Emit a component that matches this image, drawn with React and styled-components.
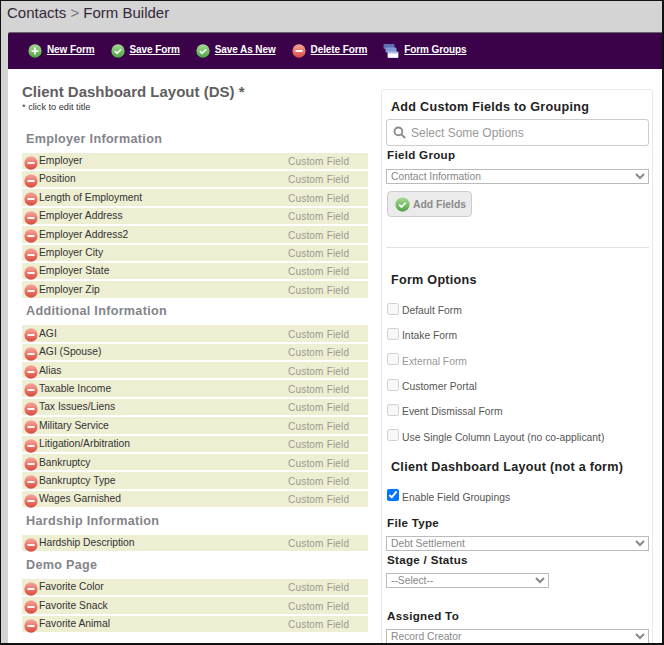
import React from 'react';
import styled, { createGlobalStyle } from 'styled-components';

const GlobalStyle = createGlobalStyle`
    html, body {
        margin: 0;
        padding: 0;
        background: #fff;
    }
    * {
        box-sizing: border-box;
    }
`;

const groups = [
    {
        title: 'Employer Information',
        fields: ['Employer', 'Position', 'Length of Employment', 'Employer Address', 'Employer Address2', 'Employer City', 'Employer State', 'Employer Zip'],
    },
    {
        title: 'Additional Information',
        fields: ['AGI', 'AGI (Spouse)', 'Alias', 'Taxable Income', 'Tax Issues/Liens', 'Military Service', 'Litigation/Arbitration', 'Bankruptcy', 'Bankruptcy Type', 'Wages Garnished'],
    },
    { title: 'Hardship Information', fields: ['Hardship Description'] },
    { title: 'Demo Page', fields: ['Favorite Color', 'Favorite Snack', 'Favorite Animal'] },
];

const formOptions = ['Default Form', 'Intake Form', 'External Form', 'Customer Portal', 'Event Dismissal Form', 'Use Single Column Layout (no co-applicant)'];

// glossy round icon used in the toolbar, rows and the add button
function RoundIcon({ kind, size = 14 }) {
    const colors = kind === 'remove'
        ? ['#f5a79c', '#d9493f']
        : ['#a6d994', '#4fa543'];
    const id = 'grad-' + kind;
    return (
        <svg width={size} height={size} viewBox="0 0 16 16" style={{ flexShrink: 0 }}>
            <defs>
                <linearGradient id={id} x1="0" y1="0" x2="0" y2="1">
                    <stop offset="0" stopColor={colors[0]} />
                    <stop offset="1" stopColor={colors[1]} />
                </linearGradient>
            </defs>
            <circle cx="8" cy="8" r="7.6" fill={`url(#${id})`} />
            {kind === 'remove' && <rect x="4" y="6.9" width="8" height="2.2" rx="0.6" fill="#fff" opacity="0.92" />}
            {kind === 'add' && <path d="M7 4h2v3h3v2H9v3H7V9H4V7h3z" fill="#fff" opacity="0.92" />}
            {kind === 'check' && <path d="M4.4 8.2l2.5 2.4 4.7-4.6" fill="none" stroke="#fff" strokeWidth="1.9" opacity="0.92" />}
        </svg>
    );
}

function GroupsIcon() {
    return (
        <svg width="16" height="16" viewBox="0 0 16 16" style={{ flexShrink: 0 }}>
            <rect x="0.5" y="1" width="11" height="5" rx="1" fill="#5f6fb5" />
            <rect x="2.5" y="4.5" width="11" height="5" rx="1" fill="#8497d6" />
            <rect x="4.5" y="8.5" width="11" height="6.5" rx="1" fill="#aebde8" />
            <rect x="5" y="10.5" width="10" height="4" fill="#fff" />
        </svg>
    );
}

function App() {
    return (
        <Page>
            <GlobalStyle />
            <Breadcrumb>Contacts <Sep>&gt;</Sep> Form Builder</Breadcrumb>
            <Toolbar>
                <ToolLink><RoundIcon kind="add" /><ToolLabel>New Form</ToolLabel></ToolLink>
                <ToolLink><RoundIcon kind="check" /><ToolLabel>Save Form</ToolLabel></ToolLink>
                <ToolLink><RoundIcon kind="check" /><ToolLabel>Save As New</ToolLabel></ToolLink>
                <ToolLink><RoundIcon kind="remove" /><ToolLabel>Delete Form</ToolLabel></ToolLink>
                <ToolLink><GroupsIcon /><ToolLabel>Form Groups</ToolLabel></ToolLink>
            </Toolbar>
            <Content>
                <Builder>
                    <FormTitle>Client Dashboard Layout (DS) *</FormTitle>
                    <TitleHint>* click to edit title</TitleHint>
                    {groups.map((group) => (
                        <div key={group.title}>
                            <GroupTitle>{group.title}</GroupTitle>
                            {group.fields.map((field) => (
                                <FieldRow key={field}>
                                    <RowIcon><RoundIcon kind="remove" /></RowIcon>
                                    <FieldName>{field}</FieldName>
                                    <FieldType>Custom Field</FieldType>
                                </FieldRow>
                            ))}
                        </div>
                    ))}
                </Builder>
                <SidePanel>
                    <PanelTitle>Add Custom Fields to Grouping</PanelTitle>
                    <SearchBox>
                        <svg width="13" height="13" viewBox="0 0 14 14">
                            <circle cx="5.8" cy="5.8" r="4.2" fill="none" stroke="#8a8a8a" strokeWidth="2" />
                            <path d="M9 9l4 4" stroke="#8a8a8a" strokeWidth="2.2" />
                        </svg>
                        <span>Select Some Options</span>
                    </SearchBox>
                    <FieldLabel $bottom={7}>Field Group</FieldLabel>
                    <Select defaultValue="Contact Information">
                        <option>Contact Information</option>
                    </Select>
                    <AddButton><RoundIcon kind="check" size={15} />Add Fields</AddButton>
                    <Divider />
                    <OptionsTitle>Form Options</OptionsTitle>
                    {formOptions.map((option) => (
                        <OptionRow key={option}>
                            <Check type="checkbox" disabled />
                            <OptionText $muted={option === 'External Form'}>{option}</OptionText>
                        </OptionRow>
                    ))}
                    <LayoutTitle>Client Dashboard Layout (not a form)</LayoutTitle>
                    <EnableRow>
                        <Check type="checkbox" defaultChecked />
                        <OptionText>Enable Field Groupings</OptionText>
                    </EnableRow>
                    <FieldLabel $top={11}>File Type</FieldLabel>
                    <Select defaultValue="Debt Settlement">
                        <option>Debt Settlement</option>
                    </Select>
                    <FieldLabel $top={2}>Stage / Status</FieldLabel>
                    <Select $width={163} defaultValue="--Select--">
                        <option>--Select--</option>
                    </Select>
                    <FieldLabel $top={21}>Assigned To</FieldLabel>
                    <Select defaultValue="Record Creator">
                        <option>Record Creator</option>
                    </Select>
                </SidePanel>
            </Content>
        </Page>
    );
}

export default App;

const Page = styled.div`
    width: 664px;
    height: 645px;
    overflow: hidden;
    background: #d4d4d4;
    border: solid #111;
    border-width: 1px 2px 2px 1px;
    padding-left: 7px;
    display: flex;
    flex-direction: column;
    font-family: "Liberation Sans", Arial, sans-serif;
`;

const Breadcrumb = styled.div`
    height: 31px;
    padding-top: 3px;
    font-size: 15px;
    line-height: 18px;
    margin-left: -1px;
    color: #33283a;
`;

const Sep = styled.span`
    color: #777;
`;

const Toolbar = styled.div`
    height: 37px;
    flex-shrink: 0;
    background: #3b0249;
    border-top: 1px solid #666;
    border-radius: 2px 0 0 0;
    padding-left: 20px;
    display: flex;
    align-items: center;
    gap: 16px;
`;

const ToolLink = styled.a`
    display: flex;
    align-items: center;
    gap: 5px;
    cursor: pointer;
`;

const ToolLabel = styled.span`
    margin-top: -3px;
    color: #fff;
    font-size: 10px;
    letter-spacing: -0.1px;
    font-weight: bold;
    text-decoration: underline;
`;

const Content = styled.div`
    flex: 1;
    background: #fff;
    display: flex;
    align-items: flex-start;
    padding: 14px 0 0 14px;
    min-height: 0;
`;

const Builder = styled.div`
    width: 346px;
    flex-shrink: 0;
`;

const FormTitle = styled.div`
    font-size: 15px;
    font-weight: bold;
    line-height: 18px;
    color: #5f5f5f;
`;

const TitleHint = styled.div`
    font-size: 9.2px;
    line-height: 10px;
    color: #333;
    margin: 1px 0 15px;
`;

const GroupTitle = styled.div`
    height: 25.6px;
    padding: 4.5px 0 0 4px;
    font-size: 12.6px;
    line-height: 15px;
    font-weight: bold;
    color: #84848a;
    letter-spacing: 0.3px;
`;

const FieldRow = styled.div`
    height: 16.4px;
    margin-bottom: 2px;
    background: #eeeed2;
    display: flex;
    position: relative;
    padding: 1.5px 0 0 17px;
    font-size: 10.3px;
    line-height: 14px;
`;

const RowIcon = styled.span`
    position: absolute;
    left: 2px;
    top: 3px;
    display: flex;
`;

const FieldName = styled.span`
    flex: 1;
    color: #333;
`;

const FieldType = styled.span`
    width: 80px;
    padding-top: 1px;
    font-size: 10px;
    color: #9a9a92;
    letter-spacing: 0.2px;
`;

const SidePanel = styled.div`
    width: 272px;
    height: 600px;
    margin: 6px 0 0 13px;
    padding: 10px 3px 0 4px;
    background: #fff;
    border: 1px solid #e8e8e8;
    border-radius: 3px;
    flex-shrink: 0;
`;

const PanelTitle = styled.div`
    font-size: 12.6px;
    font-weight: bold;
    line-height: 15px;
    color: #222;
    padding-left: 5px;
    letter-spacing: 0.27px;
    margin-bottom: 4px;
`;

const OptionsTitle = styled(PanelTitle)`
    margin: 25px 0 10px;
`;

const LayoutTitle = styled(PanelTitle)`
    margin: 10px 0 15px;
`;

const SearchBox = styled.div`
    width: 263px;
    height: 27px;
    border: 1px solid #ccc;
    border-radius: 3px;
    display: flex;
    align-items: center;
    gap: 5px;
    padding-left: 6px;
    font-size: 12px;
    color: #999;
`;

const FieldLabel = styled.div`
    font-size: 11.6px;
    font-weight: bold;
    line-height: 14px;
    color: #222;
    letter-spacing: 0.3px;
    padding-left: 1px;
    margin-top: ${(p) => (p.$top === undefined ? 2 : p.$top)}px;
    margin-bottom: ${(p) => p.$bottom || 6}px;
`;

const Select = styled.select`
    display: block;
    width: ${(p) => p.$width || 263}px;
    height: 15px;
    padding: 0;
    border: 1px solid #bbb;
    border-radius: 0;
    background: #fff;
    font-family: inherit;
    font-size: 10.3px;
    color: #888;
    outline: none;
`;

const AddButton = styled.div`
    width: 85px;
    height: 26px;
    margin: 7px 0 0 1px;
    background: #ebebeb;
    border: 1px solid #ccc;
    border-radius: 4px;
    display: flex;
    align-items: center;
    gap: 3px;
    padding-left: 7px;
    font-size: 10.4px;
    font-weight: bold;
    color: #8a8a8a;
`;

const Divider = styled.div`
    height: 1px;
    width: 263px;
    margin-top: 30px;
    background: #e2e2e2;
`;

const OptionRow = styled.div`
    height: 25.3px;
    display: flex;
    align-items: center;
    gap: 3px;
    padding-left: 1px;
`;

const EnableRow = styled(OptionRow)`
    height: 15px;
`;

const Check = styled.input`
    width: 12px;
    height: 12px;
    margin: 0 0 4px 0;
    flex-shrink: 0;
`;

const OptionText = styled.span`
    font-size: 10.35px;
    color: ${(p) => (p.$muted ? '#999' : '#555')};
`;
